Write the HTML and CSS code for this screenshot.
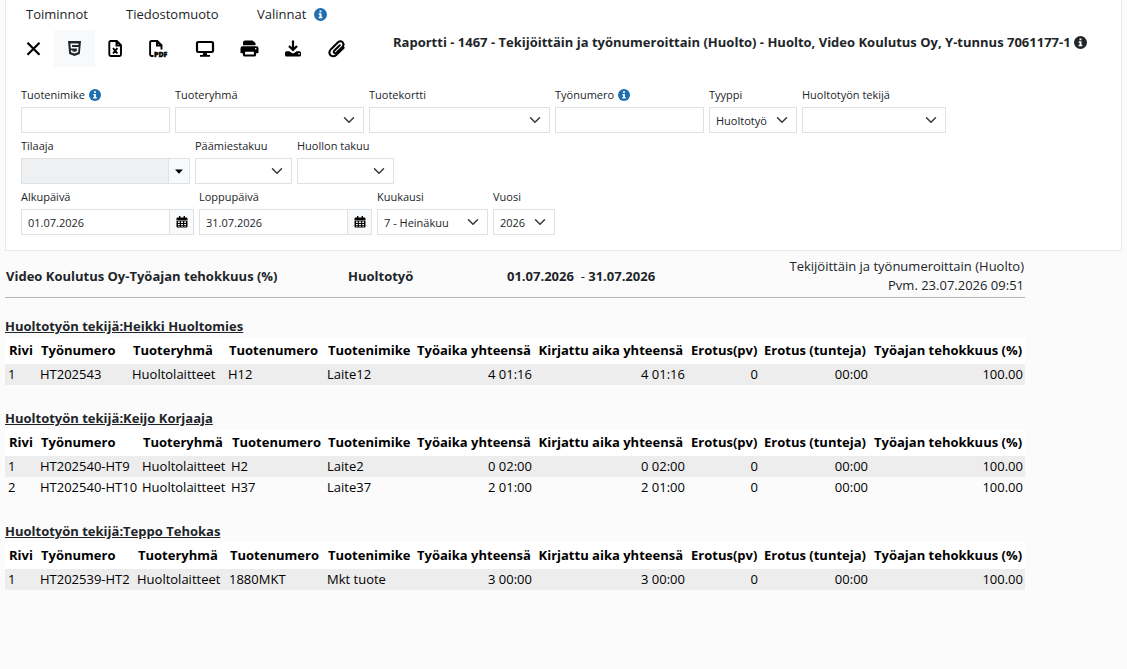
FILE: index.html
```html
<!DOCTYPE html>
<html lang="fi">
<head>
  <meta charset="UTF-8" />
  <meta name="viewport" content="width=device-width, initial-scale=1.0"/>
  <title>Raportti - 1467</title>
  <link rel="stylesheet" href="styles.css">
</head>
<body>
  <svg class="sprite" aria-hidden="true">
    <symbol id="i-info" viewBox="0 0 16 16">
      <circle cx="8" cy="8" r="8" fill="currentColor"/>
      <path d="M6.8 3h2.4v2.2H6.8zM5.8 6.5h3.4v4.2h1.1v1.8H5.7v-1.8h1.2V8.2H5.8z" fill="#fff"/>
    </symbol>
    <symbol id="i-calendar" viewBox="0 0 12 12">
      <path fill="currentColor" fill-rule="evenodd" d="M3 0h1.4v1.5h3.2V0H9v1.5h1.5q1 0 1 1V4H.5V2.500q0-1 1-1H3zM.5 4.500h11V10.500q0 1-1 1h-9q-1 0-1-1zM2 5.500V7h1.800V5.500zm3 0V7h2V5.500zm3.200 0V7H10V5.500zM2 8v1h1.800V8zm3 0v1h2V8zm3.200 0v1H10V8zM2 9.800v.8h1.800v-.8zm3 0v.8h2v-.8zm3.200 0v.8H10v-.8z"/>
    </symbol>
  </svg>

  <section class="panel">
    <div class="panel-top">
      <div class="tools">
        <div class="menu">
          <span class="menu-actions">Toiminnot</span>
          <span class="menu-format">Tiedostomuoto</span>
          <span>Valinnat <svg class="info"><use href="#i-info"/></svg></span>
        </div>
        <div class="toolbar">
          <button type="button" aria-label="Sulje">
            <svg width="17" height="18" viewBox="0 0 17 18"><path d="M2.500 2.700l12 12M14.500 2.700l-12 12" fill="none" stroke="#000" stroke-width="2.200"/></svg>
          </button>
          <button type="button" class="active" aria-label="HTML">
            <svg width="17" height="18" viewBox="0 0 17 18"><path d="M2 1h13L13.800 14 8.500 16 3.200 14z" fill="#212529"/><path d="M12.500 4.200H5.200l.3 3.500h6.300l-.4 4-2.900 1-2.800-1-.1-1.500" fill="none" stroke="#f8f9fa" stroke-width="1.500"/></svg>
          </button>
          <button type="button" aria-label="Excel">
            <svg width="17" height="18" viewBox="0 0 17 18"><path d="M3.800 1h6l4.200 4.200v9.300q0 1.500-1.500 1.500H3.800q-1.500 0-1.500-1.500v-12Q2.300 1 3.800 1zM9.500 1v4.500H14M6 8.200l4.400 5.300M10.400 8.200L6 13.500" fill="none" stroke="#000" stroke-width="1.900"/></svg>
          </button>
          <button type="button" aria-label="PDF">
            <svg width="21" height="18" viewBox="0 0 21 18"><path d="M5.500 16H3.600q-1.500 0-1.500-1.500v-12Q2.100 1 3.600 1h5.600l4.300 4.200V9.500M9 1v4.500h4.500" fill="none" stroke="#000" stroke-width="1.900"/><text x="6" y="17" class="icon-text">PDF</text></svg>
          </button>
          <button type="button" aria-label="Näyttö">
            <svg width="22" height="18" viewBox="0 0 22 18"><rect x="4" y="2" width="16" height="10" rx="1.200" fill="none" stroke="#000" stroke-width="2.200"/><path d="M10.500 12.500h3l.8 2.500H17v1.800H7V15h2.700z"/></svg>
          </button>
          <button type="button" aria-label="Tulosta">
            <svg width="20" height="18" viewBox="0 0 20 18"><path d="M4 5.200V2.500Q4 .5 6 .5h7.500l3 2.500v2.200zM3.500 6.200h14q2 0 2 2v4.300q0 .8-1 .8H16V11H5v2.300H2.500q-1 0-1-.8V8.200q0-2 2-2z"/><rect x="5" y="10.700" width="11" height="4.800" rx=".8" fill="#fff" stroke="#000" stroke-width="2.200"/><circle cx="16.700" cy="8.700" r=".8" fill="#fff"/></svg>
          </button>
          <button type="button" aria-label="Lataa">
            <svg width="20" height="18" viewBox="0 0 20 18"><path d="M10 .5v9M6 6l4 4 4-4" fill="none" stroke="#000" stroke-width="2.200"/><path fill-rule="evenodd" d="M3.500 11.200h2.800l2.200 1.600q1.500 1 3 0l2.200-1.600h2.800q1.500 0 1.500 1.500v2.200q0 1.500-1.500 1.500h-13q-1.500 0-1.500-1.500v-2.200q0-1.500 1.500-1.500zm11.800 1.900v1.400h1.400v-1.400z"/></svg>
          </button>
          <button type="button" aria-label="Liitteet">
            <svg width="20" height="18" viewBox="0 0 20 18"><path d="M12.800 5.300L7.200 10.700q-1 1.200 0 2.200 1 .9 2.200-.1l6-5.900q2.200-2.500.3-4.600Q13.400.3 11 2.300L4 9.200q-3 3.300-.5 6 2.900 2.300 5.800-.3l7.400-7.200" fill="none" stroke="#000" stroke-width="2" stroke-linecap="round"/></svg>
          </button>
        </div>
      </div>
      <h1>Raportti - 1467 - Tekijöittäin ja työnumeroittain (Huolto) - Huolto, Video Koulutus Oy, Y-tunnus 7061177-1 <svg class="info dark"><use href="#i-info"/></svg></h1>
    </div>

    <form class="filters">
      <div class="filter-row">
        <div class="field">
          <label for="tuotenimike">Tuotenimike <svg class="info small"><use href="#i-info"/></svg></label>
          <input type="text" id="tuotenimike">
        </div>
        <div class="field">
          <label for="tuoteryhma">Tuoteryhmä</label>
          <select id="tuoteryhma" class="w-group"><option></option></select>
        </div>
        <div class="field">
          <label for="tuotekortti">Tuotekortti</label>
          <select id="tuotekortti" class="w-card"><option></option></select>
        </div>
        <div class="field">
          <label for="tyonumero">Työnumero <svg class="info small"><use href="#i-info"/></svg></label>
          <input type="text" id="tyonumero">
        </div>
        <div class="field">
          <label for="tyyppi">Tyyppi</label>
          <select id="tyyppi" class="w-type"><option>Huoltotyö</option></select>
        </div>
        <div class="field">
          <label for="tekija">Huoltotyön tekijä</label>
          <select id="tekija" class="w-worker"><option></option></select>
        </div>
      </div>

      <div class="filter-row">
        <div class="field">
          <label for="tilaaja">Tilaaja</label>
          <div class="input-group">
            <input type="text" id="tilaaja" disabled>
            <button type="button" class="drop" aria-label="Valitse tilaaja"><svg width="8" height="5" viewBox="0 0 8 5"><path d="M0 .5h8L4 4.800z"/></svg></button>
          </div>
        </div>
        <div class="field">
          <label for="paamies">Päämiestakuu</label>
          <select id="paamies" class="w-warranty"><option></option></select>
        </div>
        <div class="field">
          <label for="huollon">Huollon takuu</label>
          <select id="huollon" class="w-warranty"><option></option></select>
        </div>
      </div>

      <div class="filter-row">
        <div class="field">
          <label for="alku">Alkupäivä</label>
          <div class="input-group">
            <input type="text" id="alku" value="01.07.2026">
            <button type="button" aria-label="Kalenteri"><svg width="12" height="12"><use href="#i-calendar"/></svg></button>
          </div>
        </div>
        <div class="field">
          <label for="loppu">Loppupäivä</label>
          <div class="input-group">
            <input type="text" id="loppu" value="31.07.2026">
            <button type="button" aria-label="Kalenteri"><svg width="12" height="12"><use href="#i-calendar"/></svg></button>
          </div>
        </div>
        <div class="field">
          <label for="kuukausi">Kuukausi</label>
          <select id="kuukausi" class="w-month"><option>7 - Heinäkuu</option></select>
        </div>
        <div class="field">
          <label for="vuosi">Vuosi</label>
          <select id="vuosi" class="w-year"><option>2026</option></select>
        </div>
      </div>
    </form>
  </section>

  <main class="report">
    <header class="report-head">
      <b>Video Koulutus Oy-Työajan tehokkuus (%)</b>
      <b>Huoltotyö</b>
      <span><b>01.07.2026</b> &nbsp;- <b>31.07.2026</b></span>
      <div class="report-meta">Tekijöittäin ja työnumeroittain (Huolto)<br>Pvm. 23.07.2026 09:51</div>
    </header>

    <section class="group">
      <h2>Huoltotyön tekijä:Heikki Huoltomies</h2>
      <table class="short">
        <thead>
          <tr><th class="c-row">Rivi</th><th class="c-job">Työnumero</th><th class="c-group">Tuoteryhmä</th><th class="c-num">Tuotenumero</th><th class="c-name">Tuotenimike</th><th class="c-work">Työaika yhteensä</th><th class="c-logged">Kirjattu aika yhteensä</th><th class="c-days">Erotus(pv)</th><th class="c-hours">Erotus (tunteja)</th><th>Työajan tehokkuus (%)</th></tr>
        </thead>
        <tbody>
          <tr><td>1</td><td>HT202543</td><td>Huoltolaitteet</td><td>H12</td><td>Laite12</td><td>4 01:16</td><td>4 01:16</td><td>0</td><td>00:00</td><td>100.00</td></tr>
        </tbody>
      </table>
    </section>

    <section class="group">
      <h2>Huoltotyön tekijä:Keijo Korjaaja</h2>
      <table class="long">
        <thead>
          <tr><th class="c-row">Rivi</th><th class="c-job">Työnumero</th><th class="c-group">Tuoteryhmä</th><th class="c-num">Tuotenumero</th><th class="c-name">Tuotenimike</th><th class="c-work">Työaika yhteensä</th><th class="c-logged">Kirjattu aika yhteensä</th><th class="c-days">Erotus(pv)</th><th class="c-hours">Erotus (tunteja)</th><th>Työajan tehokkuus (%)</th></tr>
        </thead>
        <tbody>
          <tr><td>1</td><td>HT202540-HT9</td><td>Huoltolaitteet</td><td>H2</td><td>Laite2</td><td>0 02:00</td><td>0 02:00</td><td>0</td><td>00:00</td><td>100.00</td></tr>
          <tr><td>2</td><td>HT202540-HT10</td><td>Huoltolaitteet</td><td>H37</td><td>Laite37</td><td>2 01:00</td><td>2 01:00</td><td>0</td><td>00:00</td><td>100.00</td></tr>
        </tbody>
      </table>
    </section>

    <section class="group">
      <h2>Huoltotyön tekijä:Teppo Tehokas</h2>
      <table class="medium">
        <thead>
          <tr><th class="c-row">Rivi</th><th class="c-job">Työnumero</th><th class="c-group">Tuoteryhmä</th><th class="c-num">Tuotenumero</th><th class="c-name">Tuotenimike</th><th class="c-work">Työaika yhteensä</th><th class="c-logged">Kirjattu aika yhteensä</th><th class="c-days">Erotus(pv)</th><th class="c-hours">Erotus (tunteja)</th><th>Työajan tehokkuus (%)</th></tr>
        </thead>
        <tbody>
          <tr><td>1</td><td>HT202539-HT2</td><td>Huoltolaitteet</td><td>1880MKT</td><td>Mkt tuote</td><td>3 00:00</td><td>3 00:00</td><td>0</td><td>00:00</td><td>100.00</td></tr>
        </tbody>
      </table>
    </section>
  </main>
</body>
</html>
```
FILE: styles.css
```css
:root {
  --text: #212529;
  --border: #dee2e6;
  --light: #f8f9fa;
  --blue: #1f6fb0;
}
* {
  box-sizing: border-box;
}
body {
  margin: 0;
  padding: 0 5px;
  background: #fbfbfb;
  color: var(--text);
  font-family: "Open Sans", "Noto Sans", sans-serif;
  font-size: 13px;
}
.sprite {
  position: absolute;
  width: 0;
  height: 0;
}
.panel {
  background: #fff;
  border: 1px solid #e9e9e9;
  border-top: none;
  padding: 5px 0 11px;
}
.panel-top {
  display: flex;
}
.menu {
  display: flex;
  padding-left: 20px;
  height: 25px;
  line-height: 19px;
}
.menu-actions {
  width: 100px;
}
.menu-format {
  width: 131px;
}
.info {
  width: 13px;
  height: 13px;
  margin-left: 4px;
  vertical-align: -2px;
  color: var(--blue);
}
.info.small {
  width: 12px;
  height: 12px;
  margin-left: 1px;
}
.info.dark {
  margin-left: 0;
  color: var(--text);
}
.toolbar {
  display: flex;
  padding-left: 7px;
}
.toolbar button {
  display: flex;
  align-items: center;
  height: 37px;
  padding: 0 12px;
  border: none;
  background: none;
  cursor: pointer;
}
.toolbar button.active,
.toolbar button:hover {
  background: var(--light);
}
.toolbar svg {
  overflow: visible;
}
.icon-text {
  font: 800 7px "Open Sans", sans-serif;
  stroke: #000;
  stroke-width: 0.4px;
}
h1 {
  flex: 1;
  margin: 28px 0 0;
  font-size: 13px;
  line-height: 19px;
  text-align: center;
}

/* Filters */
.filters {
  padding: 19px 15px 0;
}
.filter-row {
  display: flex;
  flex-wrap: wrap;
  gap: 5px;
  margin-bottom: 4px;
}
.field label {
  display: block;
  height: 21px;
  line-height: 18px;
  font-size: 11px;
}
.field input,
.field select {
  display: block;
  width: 149px;
  height: 26px;
  padding: 0 6px;
  border: 1px solid var(--border);
  border-radius: 0;
  background: #fff;
  color: var(--text);
  font-family: inherit;
  font-size: 11px;
}
.field select {
  appearance: none;
  padding: 0 0 0 6px;
  background: #fff url("data:image/svg+xml,%3Csvg xmlns='http://www.w3.org/2000/svg' viewBox='0 0 16 16'%3E%3Cpath fill='none' stroke='%23343a40' stroke-linecap='round' stroke-linejoin='round' stroke-width='2' d='m2 5 6 6 6-6'/%3E%3C/svg%3E") no-repeat right 8px center / 12px 12px;
}
.field input:disabled {
  width: 148px;
  background: #eff0f2;
}
.field .w-group { width: 189px; }
.field .w-card { width: 181px; }
.field .w-type { width: 88px; }
.field .w-worker { width: 144px; }
.field .w-warranty { width: 97px; }
.field .w-month { width: 111px; }
.field .w-year { width: 62px; }
.input-group {
  display: flex;
}
.input-group button {
  display: flex;
  align-items: center;
  justify-content: center;
  width: 24px;
  height: 26px;
  padding: 0;
  border: 1px solid var(--border);
  border-left: none;
  background: var(--light);
  color: #000;
}
.input-group .drop {
  width: 21px;
}

/* Report */
.report {
  max-width: 1020px;
}
.report-head {
  display: grid;
  grid-template-columns: 342px 159px 1fr auto;
  align-items: center;
  padding: 6px 1px 2px;
  border-bottom: 1px solid #b5b5b5;
  line-height: 19px;
  margin-bottom: 19px;
}
.report-meta {
  text-align: right;
}
.group {
  margin-bottom: 24px;
}
h2 {
  margin: 0;
  padding-bottom: 1px;
  font-size: 13px;
  line-height: 19px;
  text-decoration: underline;
}
table {
  width: 100%;
  table-layout: fixed;
  border-collapse: collapse;
  color: #000;
  white-space: nowrap;
}
th {
  height: 27px;
  padding: 0 4px 2px;
  background: #fff;
  text-align: left;
}
td {
  height: 21px;
  padding: 0 2px 2px 3px;
}
th:nth-child(n+6),
td:nth-child(n+6) {
  text-align: right;
}
tbody tr:nth-child(odd) {
  background: #ededed;
}
.c-row { width: 32px; }
.c-name { width: 89px; }
.c-work { width: 121px; }
.c-logged { width: 153px; }
.c-days { width: 73px; }
.c-hours { width: 110px; }
.short .c-job { width: 92px; }
.short .c-group { width: 96px; }
.short .c-num { width: 99px; }
.medium .c-job { width: 97px; }
.medium .c-group { width: 92px; }
.medium .c-num { width: 98px; }
.long .c-job { width: 102px; }
.long .c-group { width: 89px; }
.long .c-num { width: 96px; }
```
